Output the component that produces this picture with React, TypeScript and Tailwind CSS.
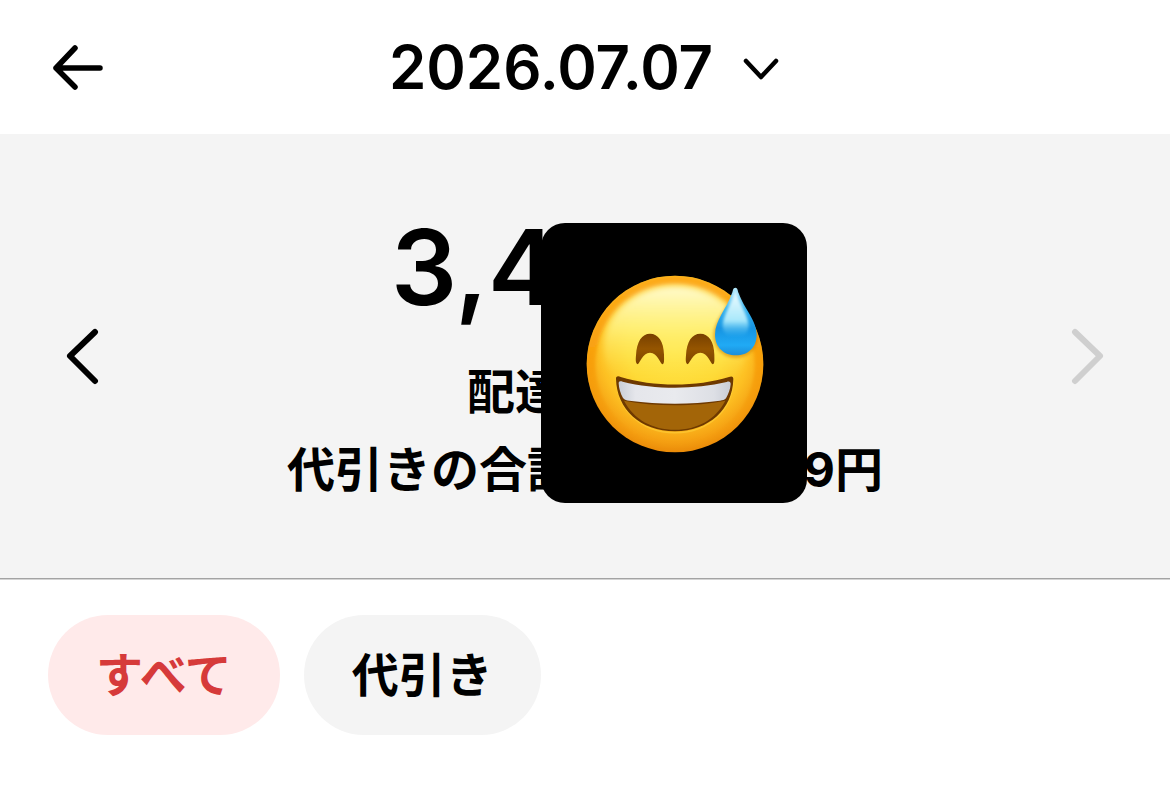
import clsx from "clsx";

interface ChipProps {
  label: string;
  active?: boolean;
}

const ArrowLeft = () => (
  <svg width={56} height={56} viewBox="0 0 56 56" fill="none" aria-hidden="true">
    <path
      d="M27 9L8 29L27 48M8 29H52"
      stroke="currentColor"
      strokeWidth={5.5}
      strokeLinecap="round"
      strokeLinejoin="round"
    />
  </svg>
);

const ChevronDown = () => (
  <svg width={40} height={40} viewBox="0 0 40 40" fill="none" aria-hidden="true">
    <path
      d="M5 14L20 30L35 14"
      stroke="currentColor"
      strokeWidth={4.5}
      strokeLinecap="round"
      strokeLinejoin="round"
    />
  </svg>
);

const ChevronLeft = () => (
  <svg width={40} height={60} viewBox="0 0 40 60" fill="none" aria-hidden="true">
    <path
      d="M33 4L8 28L33 53"
      stroke="currentColor"
      strokeWidth={6}
      strokeLinecap="round"
      strokeLinejoin="round"
    />
  </svg>
);

const ChevronRight = () => (
  <svg width={40} height={60} viewBox="0 0 40 60" fill="none" aria-hidden="true">
    <path
      d="M7 4L32 28L7 53"
      stroke="currentColor"
      strokeWidth={6}
      strokeLinecap="round"
      strokeLinejoin="round"
    />
  </svg>
);

const SweatSmile = () => (
  <svg className="h-full w-full" viewBox="3 10 798 840" role="img" aria-label="苦笑い">
    <defs>
      <radialGradient id="face" gradientUnits="userSpaceOnUse" cx="405" cy="385" r="320">
        <stop offset="0" stopColor="#ffe345" />
        <stop offset="0.45" stopColor="#fed834" />
        <stop offset="0.7" stopColor="#fdc023" />
        <stop offset="0.88" stopColor="#f5a012" />
        <stop offset="1" stopColor="#e88606" />
      </radialGradient>
      <linearGradient id="rim" x1="0" y1="0" x2="0" y2="1">
        <stop offset="0" stopColor="#fda916" />
        <stop offset="0.5" stopColor="#f79506" stopOpacity="0.6" />
        <stop offset="1" stopColor="#ec8907" stopOpacity="0" />
      </linearGradient>
      <linearGradient id="shine" x1="0" y1="0" x2="0" y2="1">
        <stop offset="0" stopColor="#fffbd0" />
        <stop offset="0.35" stopColor="#fff584" stopOpacity="0.8" />
        <stop offset="0.8" stopColor="#ffec4e" stopOpacity="0" />
      </linearGradient>
      <linearGradient id="eye" x1="0" y1="0" x2="0" y2="1">
        <stop offset="0" stopColor="#774000" />
        <stop offset="0.5" stopColor="#955500" />
        <stop offset="1" stopColor="#7b4300" />
      </linearGradient>
      <linearGradient id="teeth" x1="0" y1="0" x2="1" y2="0">
        <stop offset="0" stopColor="#c9cdd6" />
        <stop offset="0.15" stopColor="#e5e6eb" />
        <stop offset="0.5" stopColor="#e9eaee" />
        <stop offset="0.85" stopColor="#dddfe5" />
        <stop offset="1" stopColor="#c9cdd6" />
      </linearGradient>
      <linearGradient id="drop" x1="0" y1="0" x2="0" y2="1">
        <stop offset="0" stopColor="#b5e9fb" />
        <stop offset="0.3" stopColor="#38b5ee" />
        <stop offset="0.6" stopColor="#1694e2" />
        <stop offset="0.85" stopColor="#20aaf5" />
        <stop offset="1" stopColor="#1b8ed8" />
      </linearGradient>
      <linearGradient id="dropShine" x1="0" y1="0" x2="0" y2="1">
        <stop offset="0" stopColor="#f3fdff" />
        <stop offset="0.65" stopColor="#a9e8fb" />
        <stop offset="1" stopColor="#43bdf4" stopOpacity="0" />
      </linearGradient>
      <filter id="soft" x="-20%" y="-20%" width="140%" height="140%">
        <feGaussianBlur stdDeviation="5" />
      </filter>
      <filter id="softer" x="-20%" y="-20%" width="140%" height="140%">
        <feGaussianBlur stdDeviation="10" />
      </filter>
      <clipPath id="faceClip">
        <circle cx="405" cy="433" r="265" />
      </clipPath>
    </defs>

    <circle cx="405" cy="433" r="265" fill="url(#face)" />
    <g clipPath="url(#faceClip)">
      <circle cx="405" cy="433" r="252" fill="none" stroke="url(#rim)" strokeWidth={26} filter="url(#soft)" />
      <ellipse cx="405" cy="380" rx="215" ry="182" fill="url(#shine)" filter="url(#softer)" />
      <path
        d="M586 208C572 255 520 300 520 347C520 388 550 415 588 415C626 415 655 388 655 347C655 300 602 255 586 208Z"
        fill="#c87800"
        opacity="0.5"
        filter="url(#soft)"
      />
    </g>

    <path
      d="M293 434C286 431 287 420 288 407C290 365 306 342 330 342C355 342 371 365 372 405C372 419 374 431 367 434C360 430 353 400 330 399C307 400 300 430 293 434Z"
      fill="url(#eye)"
    />
    <path
      d="M443 434C436 431 437 420 438 407C440 365 456 342 481 342C506 342 522 365 523 405C523 419 525 431 518 434C511 430 504 400 481 399C458 400 450 430 443 434Z"
      fill="url(#eye)"
    />

    <path
      d="M230 473C228 567 301 639 405 639C509 639 582 567 580 473"
      fill="none"
      stroke="#ffd13b"
      strokeWidth={5}
      opacity="0.6"
    />
    <path
      d="M228 478C227 470 234 468 242 472C340 502 470 502 567 472C575 468 581 471 580 479C578 568 507 635 405 635C301 635 230 568 228 478Z"
      fill="#6e3900"
    />
    <path
      d="M252 543C345 561 465 561 556 543C526 600 473 630 405 630C337 630 282 600 252 543Z"
      fill="#a36508"
    />
    <path
      d="M236 491C236 485 241 484 248 486C345 510 463 510 560 487C568 484 572 487 572 493C571 509 565 523 558 536C554 541 548 542 540 543C450 555 360 555 268 543C260 542 254 541 249 535C241 521 237 507 236 491Z"
      fill="url(#teeth)"
    />

    <path
      d="M586 204C579 204 579 213 576 221C560 267 525 302 525 345C525 383 552 407 588 407C624 407 650 383 650 345C650 302 612 267 596 221C593 213 593 204 586 204Z"
      fill="url(#drop)"
    />
    <path
      d="M586 210C577 245 548 290 548 318C548 340 564 352 587 352C610 352 626 340 626 318C626 290 595 245 586 210Z"
      fill="url(#dropShine)"
      filter="url(#soft)"
    />
  </svg>
);

const Chip = ({ label, active }: ChipProps) => {
  return (
    <button
      type="button"
      aria-pressed={!!active}
      className={clsx(
        "h-30 rounded-full px-12 text-[47px] font-bold",
        active ? "bg-[#ffeaea] text-[#d63a3a]" : "bg-[#f4f4f4] text-black"
      )}
    >
      {label}
    </button>
  );
};

const App = () => {
  return (
    <div className="min-h-screen bg-white font-['Inter','Noto_Sans_CJK_JP',sans-serif] text-black">
      <header className="grid h-[134px] grid-cols-[104px_1fr_104px] items-center">
        <button type="button" aria-label="戻る" className="justify-self-end">
          <ArrowLeft />
        </button>
        <button
          type="button"
          className="flex items-center justify-center gap-7 text-[60px] leading-none font-semibold"
        >
          2026.07.07
          <ChevronDown />
        </button>
      </header>

      <section className="relative flex items-center justify-between border-b border-[#a3a3a3] bg-[#f4f4f4] px-[62px] pt-[73px] pb-[69px] shadow-[0_1px_0_#d4d4d4]">
        <button type="button" aria-label="前の日">
          <ChevronLeft />
        </button>
        <div className="flex flex-col items-center text-5xl font-bold">
          <p className="mb-[26px] flex w-[388px] text-[104px] leading-[120px] font-semibold">3,4</p>
          <p className="flex w-[236px] leading-[78px]">配達</p>
          <p className="flex w-[596px] justify-between leading-[78px]">
            <span>代引きの合計</span>
            <span>9円</span>
          </p>
        </div>
        <button type="button" aria-label="次の日" disabled className="text-[#cfcfcf]">
          <ChevronRight />
        </button>
        <div className="absolute top-[89px] left-1/2 -ml-11 h-[280px] w-[266px] overflow-hidden rounded-3xl bg-black">
          <SweatSmile />
        </div>
      </section>

      <div className="flex gap-6 px-12 py-9">
        <Chip label="すべて" active />
        <Chip label="代引き" />
      </div>
    </div>
  );
};

export default App;
